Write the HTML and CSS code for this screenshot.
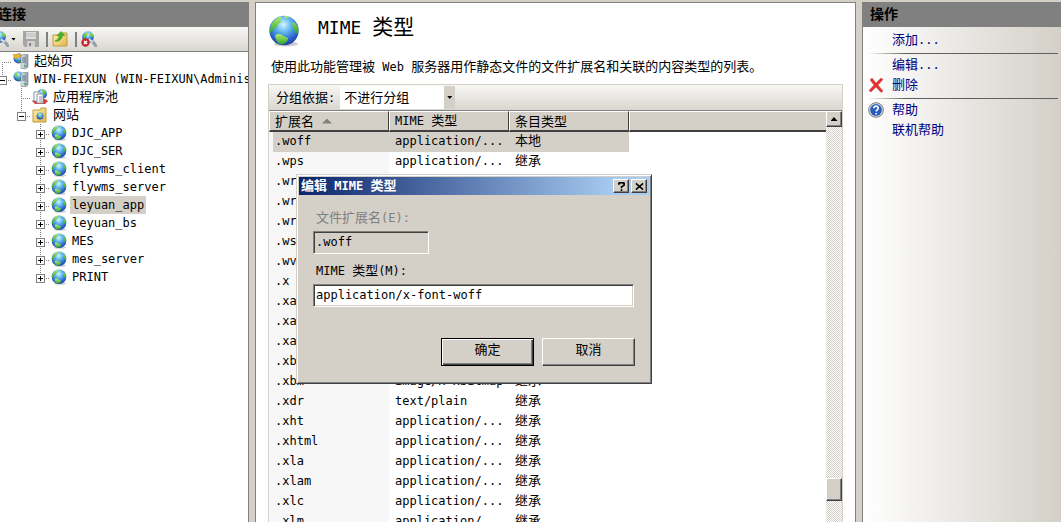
FILE: index.html
```html
<!DOCTYPE html>
<html lang="zh-CN">
<head>
<meta charset="utf-8">
<title>MIME 类型</title>
<link rel="stylesheet" href="styles.css">
</head>
<body>
<svg class="defs" aria-hidden="true">
  <defs>
    <radialGradient id="sea" cx="48%" cy="30%" r="72%">
      <stop offset="0" stop-color="#d6f6ff"/><stop offset=".35" stop-color="#63b9ee"/><stop offset=".75" stop-color="#2a62cc"/><stop offset="1" stop-color="#1d3a9c"/>
    </radialGradient>
    <linearGradient id="land" x1="0" y1="0" x2="0" y2="1"><stop offset="0" stop-color="#b4ea6c"/><stop offset="1" stop-color="#2aa52a"/></linearGradient>
    <linearGradient id="paper" x1="0" y1="0" x2="1" y2="1"><stop offset="0" stop-color="#fff3b0"/><stop offset="1" stop-color="#e0b54c"/></linearGradient>
    <linearGradient id="steel" x1="0" y1="0" x2="1" y2="0"><stop offset="0" stop-color="#e8eef2"/><stop offset="1" stop-color="#8b99a3"/></linearGradient>
    <symbol id="globe" viewBox="0 0 32 32">
      <ellipse cx="18" cy="29" rx="12" ry="2.5" fill="#000" opacity=".2"/>
      <circle cx="16" cy="15.500" r="14.700" fill="url(#sea)"/>
      <path d="M2 15C3 8 7 3 13 1.500C15 2 14 4 12 5L13 7L10 9L9 12L6 13L4 17L2 18Z" fill="url(#land)"/>
      <path d="M7 21C9 18 13 19 15 21L20 23C20 26 17 29 14 29.500C10 29 8 26 7 21Z" fill="url(#land)"/>
      <path d="M16 1L21 1.500L20 3.500L17 3ZM25 7C28 8 30 11 30.500 15L29 19L27 17L25 13L24 9Z" fill="url(#land)"/>
    </symbol>
    <symbol id="server" viewBox="0 0 16 16">
      <circle cx="5.500" cy="5.500" r="5" fill="url(#sea)"/>
      <path d="M1 4L4 1L5 4L3 7ZM4 8L8 8L6 10Z" fill="url(#land)"/>
      <path d="M8 3L10 1.500H15V14L13 15.500H8Z" fill="url(#steel)" stroke="#74828c" stroke-width=".6"/>
      <path d="M9 5H13M9 7H13M9 9H13" stroke="#65747f"/><circle cx="12" cy="13" r="1" fill="#39b54a"/>
    </symbol>
    <symbol id="plug" viewBox="0 0 16 16">
      <circle cx="7" cy="6" r="5.800" fill="url(#sea)"/>
      <path d="M2 5L5 1L7 3L5 6L3 8ZM8 1L12 3L12 6L9 5Z" fill="url(#land)"/>
      <path d="M8 9L12 11L15 15" fill="none" stroke="#8fa2ab" stroke-width="3" stroke-linecap="round"/>
      <path d="M8 8.500L12 11" stroke="#d4e1e8" stroke-width="1.500"/>
    </symbol>
  </defs>
</svg>

<main class="app">
  <section class="pane connections">
    <h2 class="pane-title"><span class="scrolled">连接</span></h2>
    <div class="toolbar">
      <button class="tool first" aria-label="连接到"><svg><use href="#plug"/></svg><i class="caret"></i></button>
      <button class="tool" aria-label="保存">
        <svg viewBox="0 0 16 16"><path d="M0 0H16V16H2L0 14Z" fill="#a5a5a5"/><path d="M3 1H13V8H3Z" fill="#dedede"/><path d="M4 10H12V16H4Z" fill="#d0d0d0"/><path d="M6 12H8V15H6Z" fill="#888"/><path d="M3 3H13M3 5H13" stroke="#bbb"/></svg>
      </button>
      <i class="bar"></i>
      <button class="tool" aria-label="上移">
        <svg viewBox="0 0 16 16"><path d="M1 4H9L10 2H15V15H1Z" fill="url(#paper)" stroke="#c19a3c"/><path d="M3 10C6 9 7 7 7 4.500H5L9 .5L13 4.500H10.500C10 8 7 11 3 10Z" fill="#47b52c" stroke="#2a8a1c" stroke-width=".5"/></svg>
      </button>
      <i class="bar"></i>
      <button class="tool" aria-label="断开连接">
        <svg viewBox="0 0 16 16"><use href="#plug"/><circle cx="4.500" cy="11.500" r="4.200" fill="#c8252b"/><path d="M3 10L6 13M6 10L3 13" stroke="#fff" stroke-width="1.500"/></svg>
      </button>
    </div>
    <ul class="tree">
      <li><div class="node"><span class="twist start"></span>
        <svg viewBox="0 0 16 16"><use href="#server"/><path d="M0 1L4 2L7 0L8 4L5 4L2 6Z" fill="#f5b52c" stroke="#cf8010" stroke-width=".5"/></svg>
        <a class="label zh" href="#">起始页</a></div></li>
      <li><div class="node"><span class="twist end"><button class="box minus" aria-label="折叠"></button></span><svg><use href="#server"/></svg><a class="label" href="#">WIN-FEIXUN (WIN-FEIXUN\Administrator)</a></div>
        <ul>
          <li><div class="node"><span class="twist"></span>
            <svg viewBox="0 0 16 16"><circle cx="10" cy="5" r="5" fill="url(#sea)"/><path d="M9 0L13 2L14 6L11 5Z" fill="url(#land)"/><path d="M0 12L3 10H13L16 12L13 15H3Z" fill="#d6403c"/><path d="M2 3H8V12H2Z" fill="#fff" stroke="#8794a5"/><path d="M5 5H11V14H5Z" fill="#fff" stroke="#8794a5"/><path d="M7 8H10M7 10H10M7 12H10" stroke="#7890b4"/></svg>
            <a class="label zh" href="#">应用程序池</a></div></li>
          <li><div class="node"><span class="twist end"><button class="box minus" aria-label="折叠"></button></span>
            <svg viewBox="0 0 16 16"><path d="M1 3H8L9 1H14V15H1Z" fill="url(#paper)" stroke="#c19a3c"/><circle cx="8" cy="9" r="3.500" fill="url(#sea)"/><path d="M5 8L8 6L7 9ZM8 10L11 9L9 12Z" fill="url(#land)"/></svg>
            <a class="label zh" href="#">网站</a></div>
            <ul>
              <li><div class="node"><span class="twist"><button class="box plus" aria-label="展开"></button></span><svg><use href="#globe"/></svg><a class="label" href="#">DJC_APP</a></div></li>
              <li><div class="node"><span class="twist"><button class="box plus" aria-label="展开"></button></span><svg><use href="#globe"/></svg><a class="label" href="#">DJC_SER</a></div></li>
              <li><div class="node"><span class="twist"><button class="box plus" aria-label="展开"></button></span><svg><use href="#globe"/></svg><a class="label" href="#">flywms_client</a></div></li>
              <li><div class="node"><span class="twist"><button class="box plus" aria-label="展开"></button></span><svg><use href="#globe"/></svg><a class="label" href="#">flywms_server</a></div></li>
              <li><div class="node"><span class="twist"><button class="box plus" aria-label="展开"></button></span><svg><use href="#globe"/></svg><a class="label selected" href="#">leyuan_app</a></div></li>
              <li><div class="node"><span class="twist"><button class="box plus" aria-label="展开"></button></span><svg><use href="#globe"/></svg><a class="label" href="#">leyuan_bs</a></div></li>
              <li><div class="node"><span class="twist"><button class="box plus" aria-label="展开"></button></span><svg><use href="#globe"/></svg><a class="label" href="#">MES</a></div></li>
              <li><div class="node"><span class="twist"><button class="box plus" aria-label="展开"></button></span><svg><use href="#globe"/></svg><a class="label" href="#">mes_server</a></div></li>
              <li><div class="node"><span class="twist end"><button class="box plus" aria-label="展开"></button></span><svg><use href="#globe"/></svg><a class="label" href="#">PRINT</a></div></li>
            </ul>
          </li>
        </ul>
      </li>
    </ul>
  </section>

  <section class="pane feature">
    <header class="feature-head">
      <svg><use href="#globe"/></svg>
      <h1>MIME <span>类型</span></h1>
    </header>
    <p class="intro"><span class="zh">使用此功能管理被</span> Web <span class="zh">服务器用作静态文件的文件扩展名和关联的内容类型的列表。</span></p>
    <div class="grid">
      <div class="grouping">
        <label for="group"><span class="zh">分组依据</span>:</label>
        <span class="picker"><select id="group" class="zh"><option>不进行分组</option></select><i class="caret"></i></span>
      </div>
      <div class="list">
        <table>
          <thead><tr><th class="zh">扩展名<i class="sort"></i></th><th>MIME <span class="zh">类型</span></th><th class="zh">条目类型</th><th class="rest"></th></tr></thead>
          <tbody>
            <tr class="selected"><td>.woff</td><td>application/...</td><td class="zh">本地</td><td></td></tr>
            <tr><td>.wps</td><td>application/...</td><td class="zh">继承</td><td></td></tr>
            <tr><td>.wri</td><td>application/...</td><td class="zh">继承</td><td></td></tr>
            <tr><td>.wrl</td><td></td><td></td><td></td></tr>
            <tr><td>.wrz</td><td></td><td></td><td></td></tr>
            <tr><td>.wsdl</td><td></td><td></td><td></td></tr>
            <tr><td>.wvx</td><td></td><td></td><td></td></tr>
            <tr><td>.x</td><td></td><td></td><td></td></tr>
            <tr><td>.xaf</td><td></td><td></td><td></td></tr>
            <tr><td>.xaml</td><td></td><td></td><td></td></tr>
            <tr><td>.xap</td><td></td><td></td><td></td></tr>
            <tr><td>.xbap</td><td></td><td></td><td></td></tr>
            <tr><td>.xbm</td><td>image/x-xbitmap</td><td class="zh">继承</td><td></td></tr>
            <tr><td>.xdr</td><td>text/plain</td><td class="zh">继承</td><td></td></tr>
            <tr><td>.xht</td><td>application/...</td><td class="zh">继承</td><td></td></tr>
            <tr><td>.xhtml</td><td>application/...</td><td class="zh">继承</td><td></td></tr>
            <tr><td>.xla</td><td>application/...</td><td class="zh">继承</td><td></td></tr>
            <tr><td>.xlam</td><td>application/...</td><td class="zh">继承</td><td></td></tr>
            <tr><td>.xlc</td><td>application/...</td><td class="zh">继承</td><td></td></tr>
            <tr><td>.xlm</td><td>application/...</td><td class="zh">继承</td><td></td></tr>
          </tbody>
        </table>
        <div class="scrollbar"><button class="raised up" aria-label="向上滚动"><i class="caret"></i></button><span class="raised thumb"></span></div>
      </div>
    </div>
  </section>

  <section class="pane actions">
    <h2 class="pane-title">操作</h2>
    <nav>
      <a href="#"><span class="zh">添加</span>...</a>
      <hr>
      <a href="#"><span class="zh">编辑</span>...</a>
      <a href="#" class="with-icon">
        <svg viewBox="0 0 16 16"><path d="M2 3L4 1L8 6L13 1L15 2.500L10 8L15 14L13 15.500L8 10L3 15L1 13.500L6 8Z" fill="#ee2a2c" stroke="#b0676a" stroke-width=".6"/></svg>
        <span class="zh">删除</span></a>
      <hr>
      <a href="#" class="with-icon">
        <svg viewBox="0 0 16 16"><circle cx="8" cy="8" r="7.300" fill="#e4e4e4" stroke="#777" stroke-width="1"/><circle cx="8" cy="8" r="5.900" fill="#2b5dc0"/><path d="M5.800 6.300C5.800 3.300 10.300 3.500 10.200 6.200C10.200 7.800 8.200 7.800 8.200 9.500M8.200 11V12.500" fill="none" stroke="#fff" stroke-width="1.600"/></svg>
        <span class="zh">帮助</span></a>
      <a href="#"><span class="zh">联机帮助</span></a>
    </nav>
  </section>
</main>

<div class="dialog" role="dialog" aria-labelledby="dialog-title">
  <header class="titlebar">
    <h2 id="dialog-title"><span class="zh">编辑</span> MIME <span class="zh">类型</span></h2>
    <button class="raised" aria-label="帮助"><svg viewBox="0 0 10 10"><path d="M2 3V1.500H3V.7H7V1.500H8V3.500L5 5.500V7M5 8V10" fill="none" stroke="#000" stroke-width="1.800"/></svg></button>
    <button class="raised" aria-label="关闭"><svg viewBox="0 0 10 10"><path d="M1 1.500L9 8.500M9 1.500L1 8.500" stroke="#000" stroke-width="1.700"/></svg></button>
  </header>
  <form class="form">
    <label class="off" for="ext"><span class="zh">文件扩展名</span>(E):</label>
    <input id="ext" class="short" value=".woff" readonly>
    <label for="mime">MIME <span class="zh">类型</span>(M):</label>
    <input id="mime" value="application/x-font-woff">
    <div class="buttons">
      <button type="button" class="raised push default zh">确定</button>
      <button type="button" class="raised push zh">取消</button>
    </div>
  </form>
</div>
</body>
</html>
```

FILE: styles.css
```css
:root {
  --face: #d4d0c8;
  --shade: #808080;
  --dark: #404040;
}
* { box-sizing: border-box; }
body {
  margin: 0;
  height: 100vh;
  overflow: hidden;
  background: var(--face);
  color: #000;
  font-family: "DejaVu Sans Mono", "Noto Sans CJK SC", monospace;
  font-size: 12px;
  line-height: 18px;
}
.zh { font-size: 13px; }
h1, h2, p, ul { margin: 0; padding: 0; }
ul { list-style: none; }
button, input, select {
  margin: 0;
  padding: 0;
  border: 0;
  border-radius: 0;
  color: inherit;
  font-family: inherit;
  font-size: 12px;
}
button.zh, select.zh { font-size: 13px; }
svg { display: block; flex: none; width: 16px; height: 16px; }
svg.defs { position: absolute; width: 0; height: 0; }
a { color: inherit; text-decoration: none; }

.app {
  display: grid;
  grid-template-columns: 249px minmax(0, 1fr) 199px;
  grid-template-rows: minmax(0, 1fr);
  gap: 6px;
  height: 100%;
  padding-top: 2px;
}
.pane { min-width: 0; overflow: hidden; background: #fff; border: 0 solid var(--shade); }
.pane-title {
  height: 25px;
  padding-left: 7px;
  background: var(--shade);
  font-size: 14px;
  line-height: 24px;
}
.caret {
  width: 5px;
  height: 3px;
  background: #000;
  clip-path: polygon(0 0, 100% 0, 50% 100%);
}

/* Connections */
.connections { border-right-width: 1px; }
.connections .pane-title { padding: 0; }
.scrolled { margin-left: -2px; }
.toolbar {
  display: flex;
  align-items: center;
  gap: 7px;
  height: 25px;
  border-bottom: 1px solid var(--shade);
  background: linear-gradient(#f8f7f5, #d9d6cf);
}
.tool { display: flex; align-items: center; gap: 2px; background: none; }
.first { margin-left: -7px; }
.bar { width: 2px; height: 15px; margin-right: -3px; background: var(--shade); }
.tree { margin-left: -7px; }
.tree ul { margin-left: 19px; }
.node { display: flex; align-items: center; height: 18px; white-space: nowrap; }
.node svg { margin: 0 3px 0 1px; }
.label { height: 18px; padding: 0 2px; }
.label.selected { background: var(--face); }
.twist {
  display: flex;
  flex: none;
  align-items: center;
  justify-content: center;
  width: 19px;
  height: 18px;
  padding-top: 2px;
  background:
    repeating-linear-gradient(#808080 0 1px, transparent 1px 2px) 9px 0 / 1px 100% no-repeat,
    repeating-linear-gradient(90deg, #808080 0 1px, transparent 1px 2px) 9px 10px / 10px 1px no-repeat;
}
.twist.start { background-position: 9px 10px, 9px 10px; }
.twist.end { background-size: 1px 10px, 10px 1px; }
.box {
  width: 9px;
  height: 9px;
  border: 1px solid var(--shade);
  background: linear-gradient(#000, #000) center / 5px 1px no-repeat, #fff;
}
.box.plus {
  background:
    linear-gradient(#000, #000) center / 5px 1px no-repeat,
    linear-gradient(#000, #000) center / 1px 5px no-repeat,
    #fff;
}

/* Feature page */
.feature {
  display: flex;
  flex-direction: column;
  padding: 11px 12px 0;
  border-width: 1px 1px 0;
}
.feature-head { display: flex; align-items: center; gap: 18px; height: 34px; }
.feature-head svg { width: 32px; height: 32px; }
h1 { padding-bottom: 8px; font-size: 18px; font-weight: 400; line-height: 26px; }
h1 span { font-size: 21px; }
.intro { padding: 10px 3px 8px; white-space: nowrap; }
.grid {
  display: flex;
  flex: 1;
  flex-direction: column;
  min-height: 0;
  border: 1px solid var(--face);
  border-bottom: 0;
}
.grouping {
  display: flex;
  flex: none;
  align-items: center;
  gap: 5px;
  height: 26px;
  padding-left: 7px;
  border-bottom: 1px solid var(--shade);
  background: linear-gradient(#f8f7f5, #d9d6cf);
}
.picker { display: flex; align-items: center; width: 115px; height: 23px; background: #fff; }
.picker select { appearance: none; flex: 1; min-width: 0; height: 23px; padding: 0 4px; background: none; }
.picker .caret {
  width: 11px;
  height: 23px;
  clip-path: none;
  background: var(--face);
  display: grid;
  place-items: center;
}
.picker .caret::after {
  content: "";
  width: 5px;
  height: 3px;
  background: #000;
  clip-path: polygon(0 0, 100% 0, 50% 100%);
}
.list { display: flex; flex: 1; min-height: 0; overflow: hidden; }
table { flex: 1; width: 100%; table-layout: fixed; border-collapse: separate; border-spacing: 0; align-self: flex-start; }
th, td { width: 120px; padding: 0 0 0 6px; text-align: left; white-space: nowrap; overflow: hidden; }
th {
  height: 20px;
  border: solid;
  border-width: 1px 1px 2px;
  border-color: #fff var(--dark) var(--dark) #fff;
  background: var(--face);
  font-weight: 400;
  line-height: 17px;
  padding-left: 5px;
}
.rest, td:last-child { width: auto; }
.rest { border-right: 0; }
td { height: 20px; padding-bottom: 2px; line-height: 18px; }
td:first-child { background: #f7f7f7; }
tr.selected td:not(:last-child) { background: var(--face); }
tr.selected td:first-child { background: linear-gradient(90deg, #f7f7f7 4px, var(--face) 4px); }
.sort {
  display: inline-block;
  width: 10px;
  height: 5px;
  margin: 0 0 2px 8px;
  background: var(--shade);
  clip-path: polygon(50% 0, 100% 100%, 0 100%);
}
.scrollbar {
  display: flex;
  flex: none;
  flex-direction: column;
  justify-content: space-between;
  width: 16px;
  padding-bottom: 21px;
  background: repeating-conic-gradient(#d4d0c8 0 25%, #fff 0 50%) 0 0 / 2px 2px;
}
.raised {
  display: grid;
  place-items: center;
  background: var(--face);
  border: 1px solid;
  border-color: #fff var(--dark) var(--dark) #fff;
  box-shadow: inset -1px -1px var(--shade);
}
.up { height: 16px; }
.up .caret { width: 7px; height: 4px; clip-path: polygon(50% 0, 100% 100%, 0 100%); }
.thumb { height: 23px; }

/* Actions */
.actions { border-left-width: 1px; background: linear-gradient(90deg, #fff, var(--face)); }
.actions nav { padding: 3px 3px 0 5px; color: #00007f; }
.actions a { display: flex; align-items: center; height: 20px; padding-left: 24px; }
.actions a.with-icon { gap: 8px; padding-left: 0; }
hr {
  height: 1px;
  margin: 3px 0 1px;
  border: 0;
  background: linear-gradient(90deg, transparent, #606060 20%);
}

/* Edit dialog floats over the page */
.dialog {
  position: absolute;
  left: 296px;
  top: 174px;
  width: 356px;
  padding: 2px;
  background: var(--face);
  border: 1px solid;
  border-color: var(--face) var(--dark) var(--dark) var(--face);
  box-shadow: inset 1px 1px #fff, inset -1px -1px var(--shade);
}
.titlebar {
  display: flex;
  align-items: center;
  gap: 2px;
  height: 18px;
  padding: 0 2px;
  background: linear-gradient(90deg, #0a246a, #a6caf0 90%);
  color: #fff;
}
.titlebar h2 { flex: 1; font-size: 12px; }
.titlebar .raised { width: 16px; height: 14px; }
.titlebar svg { width: 9px; height: 9px; }
.form { display: flex; flex-direction: column; padding: 14px 14px 15px; }
label { line-height: 18px; }
.form label { padding-left: 3px; }
.off { color: var(--shade); }
.form input {
  height: 23px;
  margin: 4px 1px 8px 0;
  padding: 0 2px 2px;
  border: 1px solid;
  border-color: var(--shade) #fff #fff var(--shade);
  box-shadow: inset 1px 1px var(--dark), inset -1px -1px var(--face);
  outline: 0;
}
.form .short { width: 116px; background: var(--face); }
.buttons { display: flex; justify-content: flex-end; gap: 8px; padding-top: 23px; }
.push { width: 93px; height: 28px; padding-bottom: 4px; line-height: 18px; }
.push.default { outline: 1px solid #000; outline-offset: -1px; border-color: #000; box-shadow: inset 1px 1px #fff, inset -1px -1px var(--dark), inset -2px -2px var(--shade); }
```
